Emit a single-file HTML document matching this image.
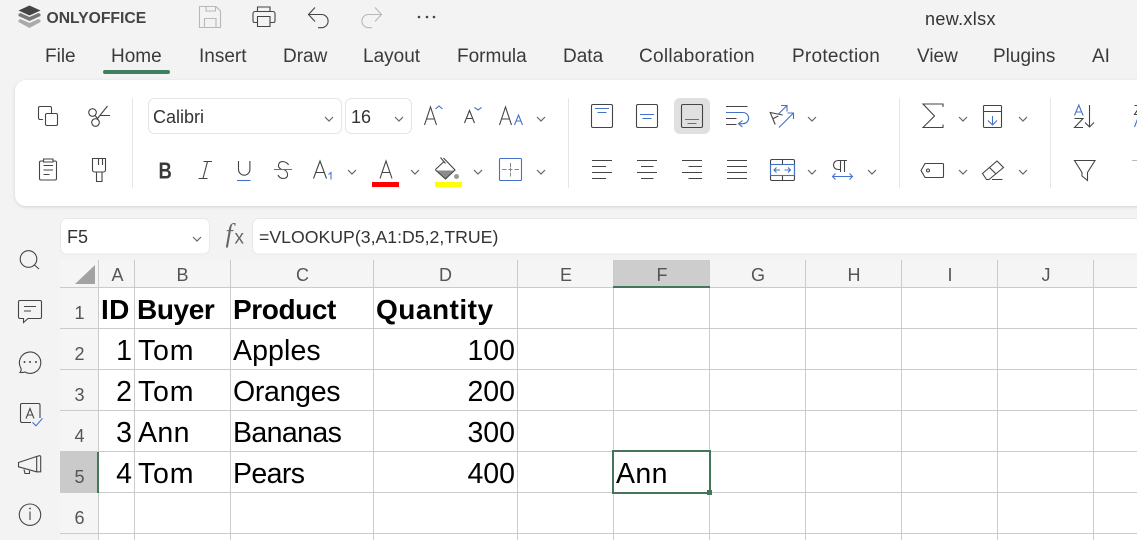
<!DOCTYPE html>
<html><head><meta charset="utf-8"><title>new.xlsx</title>
<style>
html,body{margin:0;padding:0;width:1137px;height:540px;overflow:hidden;background:#f3f3f3}
svg{display:block}
text{font-family:"Liberation Sans",sans-serif}
.m{font-size:19px;fill:#3a3a3a}
.h{font-size:18px;fill:#555;text-anchor:middle}
.c{font-size:28.500px;fill:#000}
.b{font-size:28px;font-weight:bold;fill:#000}
.r{text-anchor:end}
.i{fill:none;stroke:#444;stroke-width:1.100}
.l{fill:none;stroke:#4472c9;stroke-width:1.100}
.d{fill:none;stroke:#b8b8b8;stroke-width:1.100}
.u{fill:#333;font-size:18px}
</style></head><body>
<svg width="1137" height="540" viewBox="0 0 1137 540" xmlns="http://www.w3.org/2000/svg">
<defs>
<filter id="s" x="-2%" y="-10%" width="104%" height="120%"><feDropShadow dx="0" dy="1" stdDeviation="1.500" flood-color="#000" flood-opacity=".14"/></filter>
<path id="ch" d="M0 0l4 4 4-4" fill="none" stroke="#666" stroke-width="1.200"/>
</defs>
<rect width="1137" height="540" fill="#f3f3f3"/>

<path d="M29.500 5.500l11 5-11 5-11-5z" fill="#444"/>
<path d="M18.500 14l2-1 9 4 9-4 2 1v2l-11 5-11-5z" fill="#777"/>
<path d="M18.500 20l2-1 9 4 9-4 2 1v2l-11 6-11-6z" fill="#aaa"/>
<text x="46.500" y="23" font-size="15.700" font-weight="bold" fill="#444">ONLYOFFICE</text>

<path class="d" d="M199.500 6.500h16.500l4.500 4.500v16.500h-21zM206 6.500v4.500h9.500v-4.500M204.500 27.500v-9h11.500v9"/>
<path class="i" d="M257.500 11.500v-4.500h12.500v4.500M257.500 22.500h-3a1.500 1.500 0 0 1-1.500-1.500v-7.500a2 2 0 0 1 2-2h18a2 2 0 0 1 2 2v7.500a1.500 1.500 0 0 1-1.500 1.500h-3M257.500 16.500h12.500v10h-12.500z"/>
<path class="i" d="M315 7.500l-6.500 7 6.500 7M308.500 14.500h13a6.600 6.600 0 0 1 0 13.200h-3.500"/>
<path class="d" d="M375 7.500l6.500 7-6.500 7M381.500 14.500h-13a6.600 6.600 0 0 0 0 13.200h3.500"/>
<g fill="#444"><circle cx="419" cy="17" r="1.300"/><circle cx="427" cy="17" r="1.300"/><circle cx="434" cy="17" r="1.300"/></g>
<text x="925" y="25" class="u" letter-spacing=".35">new.xlsx</text>

<text class="m" x="45" y="62">File</text>
<text class="m" x="111" y="62">Home</text>
<text class="m" x="199" y="62">Insert</text>
<text class="m" x="283" y="62">Draw</text>
<text class="m" x="363" y="62">Layout</text>
<text class="m" x="457" y="62">Formula</text>
<text class="m" x="563" y="62">Data</text>
<text class="m" x="639" y="62" letter-spacing=".3">Collaboration</text>
<text class="m" x="792" y="62" letter-spacing=".25">Protection</text>
<text class="m" x="917" y="62">View</text>
<text class="m" x="993" y="62">Plugins</text>
<text class="m" x="1092" y="62">AI</text>
<rect x="103" y="70" width="67" height="4" rx="2" fill="#3f7f5f"/>

<rect x="15" y="80" width="1160" height="126" rx="11" fill="#fff" filter="url(#s)"/>
<g stroke="#e6e6e6"><path d="M132.500 98v90M568.500 98v90M899.500 98v90M1050.500 98v90"/></g>

<path class="i" d="M43 119.500h-3a1.500 1.500 0 0 1-1.500-1.500v-10a1.500 1.500 0 0 1 1.500-1.500h10a1.500 1.500 0 0 1 1.500 1.500v5"/>
<rect class="i" x="45.500" y="113.500" width="12" height="12" rx="1.500"/>
<circle class="i" cx="92.500" cy="112.500" r="3.800"/><circle class="i" cx="95.500" cy="122.500" r="3.800"/>
<path class="i" d="M95 115.500l3 3.500M97.500 118.500l10-12.500M100 115.500h10"/>
<path class="i" d="M43 161h-2a1.500 1.500 0 0 0-1.500 1.500v16a1.500 1.500 0 0 0 1.500 1.500h14a1.500 1.500 0 0 0 1.500-1.500v-16a1.500 1.500 0 0 0-1.500-1.500h-2M43.500 159h9.500v3h-9.500zM43.500 165.500h9.500M43.500 170h9.500M43.500 174.500h6"/>
<path class="i" d="M92.500 158.500h13v11.500a2 2 0 0 1-2 2h-9a2 2 0 0 1-2-2zM98.500 158.500v6.500M102.500 158.500v6.500M96.500 172v9.500h5.500v-9.500"/>

<rect x="148.500" y="98.500" width="193" height="35" rx="6" fill="#fff" stroke="#e4e4e4"/>
<rect x="345.500" y="98.500" width="66" height="35" rx="6" fill="#fff" stroke="#e4e4e4"/>
<text x="153" y="123" class="u">Calibri</text>
<text x="351" y="123" class="u">16</text>

<path class="i" d="M424.500 125l6-18 6 18M426.500 119h8"/>
<path class="l" d="M435.500 109l3.500-3 3.500 3"/>
<path class="i" d="M464.500 123l5-12.500 5 12.500M466.300 118.500h6.400"/>
<path class="l" d="M474.500 107.500l3.500 2.500 3.500-2.500"/>
<path class="i" d="M499.500 125l6-18 6 18M501.500 119h8"/>
<path class="l" d="M514.500 125l4-10 4 10M516 121h5"/>

<text transform="translate(158.500 178.300) scale(.8 1)" font-size="23" font-weight="bold" fill="#3a3a3a">B</text>
<path class="i" d="M203.500 161.500h8.500M198.500 178.500h9M207.500 161.500l-4.500 17"/>
<path class="i" d="M238.500 161v8.500a5.700 5.700 0 0 0 11.400 0v-8.500"/>
<path class="l" d="M237 180.500h13.500"/>
<path class="i" d="M288.500 165c-1-3-9-6-10 0-.5 2.500 1.500 3.500 3 4.500M284.500 170c3.500 1.500 5 8-1 8.500-2.500 0-4.500-1-5.500-3.500"/>
<path class="l" d="M274 169.500h18"/>
<path class="i" d="M313.500 178.500l6.500-17.500 6.500 17.500M315.700 172.500h9"/>
<path class="l" d="M328.500 174.500l2.500-2v7"/>
<path class="i" d="M380 178.500l6-17.500 6 17.500M382 172.500h8"/>
<rect x="372" y="182" width="27" height="5" fill="#f00"/>

<path d="M436.500 170.500h18l-9 8.500z" fill="#8a8a8a"/>
<path class="i" d="M443.500 158l11.500 12-9.500 9-9.500-8.500a1 1 0 0 1 0-1.500l7.500-7M440.500 157.500l5 6"/>
<circle cx="456.500" cy="176.500" r="2.500" fill="#999"/>
<rect x="435" y="182" width="27" height="5" fill="#ff0"/>

<rect class="l" x="499.500" y="158.500" width="22" height="22" rx="1"/>
<path fill="none" stroke="#888" d="M502 169.500h4.500M508.500 169.500h4M514.500 169.500h4.500M510.500 163v4M510.500 167.500v4M510.500 172.500v4"/>

<rect class="i" x="591.500" y="104.500" width="21" height="23" rx="1.500"/>
<path class="l" d="M595 108.500h14M597.500 112.500h9"/>
<rect class="i" x="636.500" y="104.500" width="21" height="23" rx="1.500"/>
<path class="l" d="M640 114.500h14M642.500 118.500h9"/>
<rect x="674" y="98" width="36" height="36" rx="6" fill="#e0e0e0"/>
<rect class="i" x="681.500" y="104.500" width="21" height="23" rx="1.500"/>
<path class="l" d="M685 119.500h14M687.500 123.500h9"/>
<path class="i" d="M726 106.500h21.500M726 118.500h10.500M726 124.500h10.500"/>
<path class="l" d="M726 112.500h17a5.600 5.600 0 0 1 0 11.200h-4.500M742.500 120.500l-4 3.200 4 3.200"/>
<path class="i" d="M782.700 115l-12.500-2.500 5 12M773.300 118.500l5-2.500"/>
<path class="l" d="M779 127.500l14.500-14.500M787.500 113h6v6M778.500 114l8.500-8.500M781 105.500h6v6"/>

<path class="i" d="M592 160.500h20M592 166.500h14M592 172.500h20M592 178.500h14"/>
<path class="i" d="M637 160.500h20M641 166.500h12.500M637 172.500h20M641 178.500h12.500"/>
<path class="i" d="M682 160.500h20M688.500 166.500h13.500M682 172.500h20M688.500 178.500h13.500"/>
<path class="i" d="M727 160.500h20M727 166.500h20M727 172.500h20M727 178.500h20"/>
<rect class="i" x="770.500" y="159.500" width="24" height="21" rx="1.500"/>
<path class="i" d="M782.500 159.500v5M782.500 175.500v5"/>
<rect class="l" x="770.500" y="164.500" width="24" height="11"/>
<path class="l" d="M774 170h6M776.500 167.500l-2.500 2.500 2.500 2.500M784.500 170h6M788 167.500l2.500 2.500-2.500 2.500"/>
<path class="i" d="M847 160.500h-9a4.500 4.500 0 0 0 0 9h2.500M840.500 160.500v11.500M844.500 160.500v11.500"/>
<path class="l" d="M832.500 176.500h20M835.500 173.500l-3 3 3 3M849.500 173.500l3 3-3 3"/>

<path class="i" d="M943 107v-3h-20l11.500 12-11.500 11.500h20v-3"/>
<rect class="i" x="983.500" y="105.500" width="18" height="22" rx="1"/>
<path class="i" d="M983.500 111.500h18"/>
<path class="l" d="M992.500 116v9M988 120.500l4.500 4.500 4.500-4.500"/>
<path class="l" d="M1074.500 115.500l4.300-10.500 4.300 10.500M1076 112h5.600"/>
<path class="i" d="M1074.500 118.500h8.500l-8.500 9h8.500M1089.500 105v22M1085 122.500l4.500 4.500 4.500-4.500"/>
<path class="i" d="M1134.500 105.500h6l-6 9h6"/>
<path class="l" d="M1134.500 127l4-10.500 4 10.500"/>

<path class="i" d="M925 163.500h17.500a1 1 0 0 1 1 1v12a1 1 0 0 1-1 1h-17.500l-4-7z"/>
<circle class="i" cx="928" cy="170.500" r="1.500"/>
<path class="i" d="M982.500 173.500l14.500-12.500 6.500 6.500-14.500 12-2.500 0zM989.500 167.500l6 6M992 179.500h10.500"/>
<path class="i" d="M1074.500 160.500h20.500l-7.500 12v8l-5.500-4.500v-3.500z"/>
<path class="d" d="M1132 160.500h10l-5 7"/>

<g>
<use href="#ch" x="325" y="117"/><use href="#ch" x="395" y="117"/><use href="#ch" x="537" y="117"/><use href="#ch" x="808" y="117"/><use href="#ch" x="959" y="117"/><use href="#ch" x="1019" y="117"/>
<use href="#ch" x="348" y="170"/><use href="#ch" x="411" y="170"/><use href="#ch" x="474" y="170"/><use href="#ch" x="537" y="170"/><use href="#ch" x="808" y="170"/><use href="#ch" x="868" y="170"/><use href="#ch" x="959" y="170"/><use href="#ch" x="1019" y="170"/>
</g>

<circle class="i" cx="28.500" cy="259" r="8.300"/><path class="i" d="M34.500 265l4.500 4"/>
<path class="i" d="M20 300.500h20a1.500 1.500 0 0 1 1.500 1.500v15a1.500 1.500 0 0 1-1.500 1.500h-12l-4.500 4v-4h-3.500a1.500 1.500 0 0 1-1.500-1.500v-15a1.500 1.500 0 0 1 1.500-1.500zM24 306.500h12M24 311h7"/>
<path class="i" d="M20 372.500c1.200-1.500 1.500-3 .8-4.500a10.700 10.700 0 1 1 4 4c-1.500.5-3 .7-4.800.5z"/>
<g fill="#444"><circle cx="24.500" cy="362" r="1"/><circle cx="30" cy="362" r="1"/><circle cx="36" cy="362" r="1"/></g>
<path class="i" d="M31 422.500h-9a1.500 1.500 0 0 1-1.500-1.500v-16a1.500 1.500 0 0 1 1.500-1.500h16.500a1.500 1.500 0 0 1 1.500 1.500v13"/>
<path class="i" d="M26 418.500l4-10 4 10M27.500 415h5"/>
<path class="l" d="M32.500 422.300l3.500 3.500 6.500-7.500"/>
<path class="i" d="M18.500 462.500l18-6 3-.8a1 1 0 0 1 1.200 1v15.100h-4.200l-18-5zM36.700 456.500v16M24 469.500l1 4h4.500v-2.700"/>
<circle class="i" cx="30" cy="514.700" r="10.700"/><path class="i" d="M30 511.500v8.500"/><circle cx="30" cy="508.500" r=".9" fill="#444"/>

<rect x="60.500" y="218.500" width="149" height="35.500" rx="6" fill="#fff" stroke="#e8e8e8"/>
<text x="67" y="243" class="u">F5</text>
<use href="#ch" x="193" y="237"/>
<text x="225.500" y="242" font-size="26" font-style="italic" fill="#666" style="font-family:'Liberation Serif',serif">f</text>
<text x="234.500" y="243.500" font-size="19" fill="#666">x</text>
<rect x="252.500" y="218.500" width="900" height="35.500" rx="6" fill="#fff" stroke="#e8e8e8"/>
<text x="259" y="243" font-size="17.700" fill="#333">=VLOOKUP(3,A1:D5,2,TRUE)</text>

<rect x="60" y="260" width="1077" height="280" fill="#f5f5f5"/>
<rect x="99" y="288" width="1038" height="252" fill="#fff"/>
<rect x="613" y="260" width="97" height="27" fill="#cdcdcd"/>
<rect x="60" y="452" width="38" height="41" fill="#cacaca"/>
<g stroke="#cbcbcb">
<path d="M98.500 260v280M134.500 260v280M230.500 260v280M373.500 260v280M517.500 260v280M613.500 260v280M709.500 260v280M805.500 260v280M901.500 260v280M997.500 260v280M1093.500 260v280"/>
<path d="M60 287.500h1077M60 328.500h1077M60 369.500h1077M60 410.500h1077M60 451.500h1077M60 492.500h1077M60 533.500h1077"/>
</g>
<path d="M75 284h20v-19z" fill="#a2a2a2"/>
<rect x="613" y="286" width="97" height="2" fill="#43765b"/>
<rect x="97" y="452" width="2" height="41" fill="#43765b"/>

<text class="h" x="117.500" y="281">A</text><text class="h" x="182.500" y="281">B</text><text class="h" x="302.500" y="281">C</text><text class="h" x="445.500" y="281">D</text><text class="h" x="566" y="281">E</text><text class="h" x="662" y="281">F</text><text class="h" x="758" y="281">G</text><text class="h" x="854" y="281">H</text><text class="h" x="950" y="281">I</text><text class="h" x="1046" y="281">J</text>
<text class="h" x="79.500" y="319">1</text><text class="h" x="79.500" y="360">2</text><text class="h" x="79.500" y="401">3</text><text class="h" x="79.500" y="442">4</text><text class="h" x="79.500" y="483">5</text><text class="h" x="79.500" y="524">6</text>

<text class="b" x="101" y="319" letter-spacing=".3">ID</text><text class="b" x="137" y="319" letter-spacing="-.4">Buyer</text><text class="b" x="233" y="319" letter-spacing="-.4">Product</text><text class="b" x="376" y="319" letter-spacing=".5">Quantity</text>
<text class="c r" x="132" y="360">1</text><text class="c" x="138" y="360" letter-spacing=".8">Tom</text><text class="c" x="233" y="360" letter-spacing=".1">Apples</text><text class="c r" x="515" y="360">100</text>
<text class="c r" x="132" y="401">2</text><text class="c" x="138" y="401" letter-spacing=".8">Tom</text><text class="c" x="233" y="401" letter-spacing="-.3">Oranges</text><text class="c r" x="515" y="401">200</text>
<text class="c r" x="132" y="442">3</text><text class="c" x="138" y="442" letter-spacing=".4">Ann</text><text class="c" x="233" y="442" letter-spacing="-.6">Bananas</text><text class="c r" x="515" y="442">300</text>
<text class="c r" x="132" y="483">4</text><text class="c" x="138" y="483" letter-spacing=".8">Tom</text><text class="c" x="233" y="483" letter-spacing="-.6">Pears</text><text class="c r" x="515" y="483">400</text>
<text class="c" x="616" y="483" letter-spacing=".4">Ann</text>

<rect x="613" y="451" width="97" height="42" fill="none" stroke="#43765b" stroke-width="2"/>
<rect x="707" y="490" width="5" height="5" fill="#43765b"/>
</svg>
</body></html>
